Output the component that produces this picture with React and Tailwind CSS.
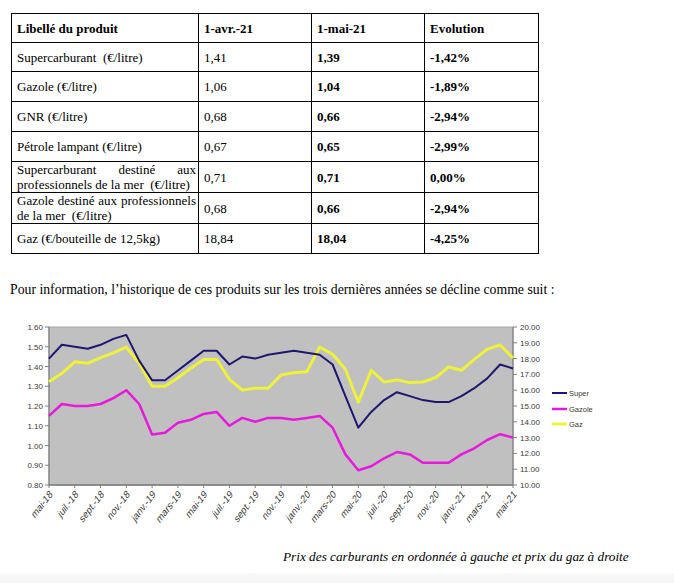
const rows = [
  { label: 'Supercarburant\u00a0 (€/litre)', avr: '1,41', mai: '1,39', evo: '-1,42%' },
  { label: 'Gazole (€/litre)', avr: '1,06', mai: '1,04', evo: '-1,89%' },
  { label: 'GNR (€/litre)', avr: '0,68', mai: '0,66', evo: '-2,94%' },
  { label: 'Pétrole lampant (€/litre)', avr: '0,67', mai: '0,65', evo: '-2,99%' },
  { lines: ['Supercarburant destiné aux', 'professionnels de la mer\u00a0 (€/litre)'], avr: '0,71', mai: '0,71', evo: '0,00%' },
  { lines: ['Gazole destiné aux professionnels', 'de la mer\u00a0 (€/litre)'], avr: '0,68', mai: '0,66', evo: '-2,94%' },
  { label: 'Gaz (€/bouteille de 12,5kg)', avr: '18,84', mai: '18,04', evo: '-4,25%' },
]

// monthly values, mai-18 -> mai-21
const superData = [1.44, 1.51, 1.50, 1.49, 1.51, 1.54, 1.56, 1.43, 1.33, 1.33, 1.38, 1.43, 1.48, 1.48, 1.41, 1.45, 1.44, 1.46, 1.47, 1.48, 1.47, 1.46, 1.41, 1.25, 1.09, 1.17, 1.23, 1.27, 1.25, 1.23, 1.22, 1.22, 1.25, 1.29, 1.34, 1.41, 1.39]
const gazoleData = [1.15, 1.21, 1.20, 1.20, 1.21, 1.24, 1.28, 1.21, 1.055, 1.065, 1.115, 1.13, 1.16, 1.17, 1.10, 1.14, 1.12, 1.14, 1.14, 1.13, 1.14, 1.15, 1.09, 0.955, 0.875, 0.895, 0.935, 0.967, 0.955, 0.913, 0.913, 0.913, 0.955, 0.986, 1.028, 1.057, 1.04]
const gazData = [16.54, 17.07, 17.8, 17.7, 18.06, 18.37, 18.73, 17.7, 16.25, 16.25, 16.79, 17.39, 17.95, 17.95, 16.69, 16.01, 16.12, 16.12, 16.96, 17.1, 17.17, 18.73, 18.27, 17.32, 15.25, 17.26, 16.52, 16.65, 16.48, 16.52, 16.79, 17.47, 17.26, 17.95, 18.59, 18.86, 18.04]

const months = ['mai-18', 'juil.-18', 'sept.-18', 'nov.-18', 'janv.-19', 'mars-19', 'mai-19', 'juil.-19', 'sept.-19', 'nov.-19', 'janv.-20', 'mars-20', 'mai-20', 'juil.-20', 'sept.-20', 'nov.-20', 'janv.-21', 'mars-21', 'mai-21']

const X0 = 49
const X1 = 513
const Y0 = 326
const Y1 = 484
const px = (i) => X0 + (i * (X1 - X0)) / 36
const pyL = (v) => Y0 + ((1.6 - v) / 0.8) * (Y1 - Y0)
const pyR = (v) => Y0 + ((20 - v) / 10) * (Y1 - Y0)
const pts = (data, fy) => data.map((v, i) => `${px(i).toFixed(1)},${fy(v).toFixed(1)}`).join(' ')

const leftTicks = ['1.60', '1.50', '1.40', '1.30', '1.20', '1.10', '1.00', '0.90', '0.80']
const rightTicks = ['20.00', '19.00', '18.00', '17.00', '16.00', '15.00', '14.00', '13.00', '12.00', '11.00', '10.00']

function Chart() {
  const axisFont = { fontFamily: '"Liberation Sans", Arial, sans-serif' }
  return (
    <svg width="674" height="235" viewBox="0 310 674 235" className="block">
      <rect x={X0} y={Y0} width={X1 - X0} height={Y1 - Y0} fill="#c0c0c0" stroke="#a8a8a8" strokeWidth="1" />
      <line x1={X0} y1={Y0} x2={X0} y2={Y1} stroke="#808080" strokeWidth="1.2" />
      <line x1={X1} y1={Y0} x2={X1} y2={Y1} stroke="#808080" strokeWidth="1.2" />
      <line x1={X0} y1={Y1} x2={X1} y2={Y1} stroke="#7a7a7a" strokeWidth="1.6" />

      {leftTicks.map((t, i) => {
        const y = Y0 + (i * (Y1 - Y0)) / 8
        return (
          <g key={t}>
            <line x1={X0 - 4} y1={y} x2={X0} y2={y} stroke="#808080" />
            <text x={X0 - 6} y={y + 3} textAnchor="end" fontSize="8" fill="#3a3a3a" style={axisFont}>{t}</text>
          </g>
        )
      })}
      {rightTicks.map((t, i) => {
        const y = Y0 + (i * (Y1 - Y0)) / 10
        return (
          <g key={t}>
            <line x1={X1} y1={y} x2={X1 + 4} y2={y} stroke="#808080" />
            <text x={X1 + 7} y={y + 3} fontSize="8" fill="#3a3a3a" style={axisFont}>{t}</text>
          </g>
        )
      })}
      {months.map((m, i) => {
        const x = px(i * 2)
        return (
          <g key={m}>
            <line x1={x} y1={Y1} x2={x} y2={Y1 + 3} stroke="#808080" />
            <text textAnchor="end" fontSize="8.5" fill="#3a3a3a" style={axisFont} transform={`translate(${x + 4} ${Y1 + 10}) scale(1 1.3) rotate(-45)`}>{m}</text>
          </g>
        )
      })}

      <polyline points={pts(gazData, pyR)} fill="none" stroke="#eef23a" strokeWidth="3" strokeLinejoin="round" />
      <polyline points={pts(gazoleData, pyL)} fill="none" stroke="#e619dc" strokeWidth="2.5" strokeLinejoin="round" />
      <polyline points={pts(superData, pyL)} fill="none" stroke="#1c186e" strokeWidth="2" strokeLinejoin="round" />

      {/* legend */}
      <line x1="552" y1="392" x2="567" y2="392" stroke="#1c186e" strokeWidth="2" />
      <text x="569" y="395" fontSize="7.5" fill="#3a3a3a" style={axisFont}>Super</text>
      <line x1="552" y1="408" x2="567" y2="408" stroke="#e619dc" strokeWidth="2.5" />
      <text x="569" y="411" fontSize="7.5" fill="#3a3a3a" style={axisFont}>Gazole</text>
      <line x1="552" y1="423" x2="567" y2="423" stroke="#eef23a" strokeWidth="3" />
      <text x="569" y="426" fontSize="7.5" fill="#3a3a3a" style={axisFont}>Gaz</text>
    </svg>
  )
}

export default function App() {
  return (
    <div className="w-[674px] h-[583px] overflow-hidden bg-white text-black font-['Liberation_Serif','Times_New_Roman',serif]">
      <div className="pt-[13px] pl-[11px]">
        <table className="border-collapse text-[13px] leading-[15px]">
          <colgroup>
            <col className="w-[187px]" />
            <col className="w-[113px]" />
            <col className="w-[113px]" />
            <col className="w-[114px]" />
          </colgroup>
          <thead>
            <tr className="h-[29px]">
              <th className="border border-black pl-[5px] text-left font-bold">Libellé du produit</th>
              <th className="border border-black pl-[5px] text-left font-bold">1-avr.-21</th>
              <th className="border border-black pl-[5px] text-left font-bold">1-mai-21</th>
              <th className="border border-black pl-[5px] text-left font-bold">Evolution</th>
            </tr>
          </thead>
          <tbody>
            {rows.map((r, i) => (
              <tr key={i} className={r.lines ? 'h-[31px]' : i === 0 ? 'h-[29px]' : 'h-[30px]'}>
                <td className="border border-black pl-[5px] pr-[2px] align-middle">
                  {r.lines ? (
                    <>
                      <span className="block text-justify [text-align-last:justify]">{r.lines[0]}</span>
                      <span className="block whitespace-nowrap">{r.lines[1]}</span>
                    </>
                  ) : (
                    r.label
                  )}
                </td>
                <td className="border border-black pl-[5px]">{r.avr}</td>
                <td className="border border-black pl-[5px] font-bold">{r.mai}</td>
                <td className="border border-black pl-[5px] font-bold">{r.evo}</td>
              </tr>
            ))}
          </tbody>
        </table>
      </div>

      <p className="mt-[28px] pl-[10px] text-[13.75px] leading-[15px]">
        Pour information, l’historique de ces produits sur les trois dernières années se décline comme suit :
      </p>

      <div className="mt-[14px]">
        <Chart />
      </div>

      <p className="mt-[3px] pl-[283px] text-[13.25px] leading-[16px] italic">
        Prix des carburants en ordonnée à gauche et prix du gaz à droite
      </p>

      <div className="mt-[8px] h-[11px] bg-gradient-to-b from-[#fafafa] to-[#f2f2f2]" />
    </div>
  )
}
